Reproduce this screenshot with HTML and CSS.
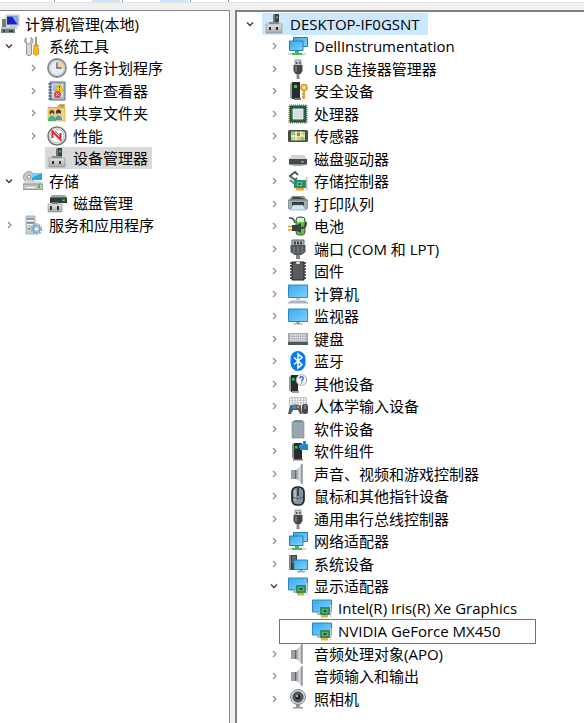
FILE: index.html
```html
<!DOCTYPE html>
<html lang="zh-CN">
  <head>
    <meta charset="UTF-8" />
    <meta name="viewport" content="width=device-width, initial-scale=1.0" />
    <title>计算机管理</title>
    <link rel="stylesheet" href="styles.css">
  </head>
  <body>
    <!-- icon set, 20x20 each -->
    <svg class="sprite" aria-hidden="true">
      <defs>
        <linearGradient id="g-screen" x1="0" y1="0" x2="1" y2="1">
          <stop offset="0" stop-color="#35aaf2" /><stop offset="1" stop-color="#84d2ff" />
        </linearGradient>
        <linearGradient id="g-steel" x1="0" y1="0" x2="1" y2="0">
          <stop offset="0" stop-color="#8b9096" /><stop offset=".5" stop-color="#e3e5e7" /><stop offset="1" stop-color="#9a9ea3" />
        </linearGradient>
        <linearGradient id="g-case" x1="0" y1="0" x2="0" y2="1">
          <stop offset="0" stop-color="#e6e6e6" /><stop offset="1" stop-color="#a4a6a8" />
        </linearGradient>
      </defs>

      <symbol id="closed" viewBox="0 0 16 16"><path d="M7 5l3 3-3 3" fill="none" stroke="#8c8c8c" stroke-width="1.2" /></symbol>
      <symbol id="open" viewBox="0 0 16 16"><path d="M5 6.5l3 3 3-3" fill="none" stroke="#404040" stroke-width="1.4" /></symbol>

      <symbol id="computer-mgmt" viewBox="0 0 20 20">
        <path d="M5 1h13v11H5z" fill="#d9dbd2" stroke="#a9aba3" stroke-width=".6" />
        <path d="M6 2.500h10.500v8H6z" fill="#1721c9" />
        <path d="M11 2.500h5.500v8z" fill="#7fb0f5" />
        <path d="M9 12h6l2 3H8z" fill="#c9cbc6" />
        <path d="M1 5h4v9H1z" fill="#6e7d86" />
        <path d="M0 13h14v6H0z" fill="#718087" />
        <path d="M0 13h14v2H0z" fill="#b7c3c6" />
        <path d="M2 16h2v2H2zM8 16h4v2H8z" fill="#35434a" />
        <path d="M2 11h3v2H2z" fill="#39ac3e" />
      </symbol>

      <symbol id="tools" viewBox="0 0 20 20">
        <path d="M3 2v4l2.500 2 2.500-2V1.500c2 1 2.500 4.500.5 6.500v10c0 2-5 2-5 0V8C1 6 1.500 3 3 2z" fill="#d6d9db" stroke="#777b7e" stroke-width=".8" />
        <path d="M12.500 1h1v8h-1z" fill="#a6a8ab" stroke="#777" stroke-width=".6" />
        <path d="M10.500 9h5l-.8 2.500.8 1.500v5c0 1.500-5 1.500-5 0v-5l.8-1.500z" fill="#f8b617" stroke="#cf8300" stroke-width=".7" />
      </symbol>

      <symbol id="clock" viewBox="0 0 20 20">
        <circle cx="10" cy="10" r="9" fill="#e9ecee" stroke="#868a8e" stroke-width="1.800" />
        <path d="M10 10V3a7 7 0 0 1 7 7z" fill="#f6d59a" />
        <circle cx="10" cy="10" r="7.300" fill="none" stroke="#c5c8ca" />
        <path d="M10 4.500V10h4.500" fill="none" stroke="#566879" stroke-width="1.400" />
      </symbol>

      <symbol id="events" viewBox="0 0 20 20">
        <path d="M3 1h15v18H3z" fill="#a5bbd3" stroke="#576e98" />
        <path d="M5 3h11v13H5z" fill="#d2ddec" />
        <path d="M6 5h7M6 7h7M6 9h7" stroke="#7d98bc" />
        <path d="M1.500 3h3M1.500 6h3M1.500 9h3M1.500 12h3M1.500 15h3M1.500 18h3" stroke="#4e5b77" stroke-width="1.300" />
        <path d="M12.500 2l4 8h-8z" fill="#ffd91a" stroke="#c99c00" stroke-width=".7" />
        <path d="M12.500 5v2.500m0 .7v1" stroke="#333" />
        <circle cx="10.500" cy="13.500" r="3.500" fill="#dc4548" />
        <path d="M9.200 12.200l2.600 2.600m0-2.600l-2.600 2.600" stroke="#fff" />
      </symbol>

      <symbol id="shared" viewBox="0 0 20 20">
        <path d="M1 4h9l2-3h6v16H1z" fill="#e3b654" />
        <path d="M1 5h17v13H1z" fill="#f4d27b" stroke="#d3a33f" stroke-width=".6" />
        <path d="M13 2h4v1.500h-4z" fill="#4f9fd7" />
        <circle cx="5" cy="9.500" r="2.500" fill="#5c4334" /><circle cx="11.500" cy="9" r="2.500" fill="#453327" />
        <path d="M4 10h2.500v2H4zM10.500 10h2.500v2h-2.500z" fill="#edbd90" />
        <path d="M1 18c0-7 8-7 8 0z" fill="#3db583" /><path d="M8 17c0-6 7-6 7 0z" fill="#409ccf" />
      </symbol>

      <symbol id="perf" viewBox="0 0 20 20">
        <circle cx="10" cy="10" r="9" fill="#f5f5f5" stroke="#777b7d" stroke-width="1.600" />
        <circle cx="10" cy="10" r="7" fill="#fff" stroke="#b6b8b8" />
        <path d="M5.500 12V5.500l8 8V7" fill="none" stroke="#df292d" stroke-width="2" />
        <path d="M8 5l6 6" stroke="#444" stroke-width=".8" />
      </symbol>

      <symbol id="device" viewBox="0 0 20 20">
        <path d="M9 1l2-1h4v9H9z" fill="#3d4143" />
        <path d="M9 1l2-1v9H9z" fill="#727678" />
        <path d="M12 2.500h2v2h-2z" fill="#38ce45" />
        <path d="M5 8h10v3H5z" fill="#85898b" />
        <path d="M2 10h16v9H2z" fill="url(#g-case)" stroke="#929597" stroke-width=".7" />
        <path d="M5 13h2v3H5zM12 13h2v3h-2z" fill="#2d2f31" />
      </symbol>

      <symbol id="storage" viewBox="0 0 20 20">
        <circle cx="6" cy="6" r="5.500" fill="#c6cbcf" stroke="#888e92" stroke-width=".8" />
        <circle cx="6" cy="6" r="1.800" fill="#fff" stroke="#8d9297" />
        <path d="M9 2h10v7H9z" fill="#27a5e4" /><path d="M9 2h10L9 7z" fill="#75cef5" />
        <path d="M2 10h16l2 3v6H0v-6z" fill="#d5d7d8" />
        <path d="M0 13h20v5.500H0z" fill="#c1c4c5" stroke="#858889" stroke-width=".8" />
        <path d="M15 13.500h2v4h-2z" fill="#43c638" /><path d="M3 16.500h9" stroke="#fff" />
      </symbol>

      <symbol id="disk-mgmt" viewBox="0 0 20 20">
        <path d="M5 2h13l2 3v4H3V5z" fill="#a0a3a4" />
        <path d="M3 4.500h17V10H3z" fill="#34383a" />
        <path d="M15 6.500h3v1.500h-3z" fill="#42d54c" />
        <path d="M5 9h6v3H5z" fill="#747779" />
        <path d="M1 11h14v8H1z" fill="url(#g-case)" stroke="#929597" stroke-width=".7" />
        <path d="M3 13h2v4H3zM10 13h2v4h-2z" fill="#2d2f31" />
      </symbol>

      <symbol id="services" viewBox="0 0 20 20">
        <path d="M3 1h9v18H3z" fill="#c4d1da" stroke="#92a2ad" stroke-width=".8" />
        <path d="M4 4h7M4 8h7" stroke="#53636e" stroke-width="1.200" /><path d="M4 5.500h7M4 9.500h7" stroke="#fff" />
        <path d="M5 13h2v2H5z" fill="#55b951" />
        <circle cx="13.500" cy="14" r="4.800" fill="none" stroke="#83abc9" stroke-width="2" stroke-dasharray="2 1" />
        <circle cx="13.500" cy="14" r="3.500" fill="#afcfe4" stroke="#6c98ba" /><circle cx="13.500" cy="14" r="1.200" fill="#fff" />
      </symbol>

      <symbol id="network" viewBox="0 0 20 20">
        <path d="M5.500 1.500h14v9h-14z" fill="url(#g-screen)" stroke="#277eb5" />
        <path d="M1.500 5h13.500v9.500H1.500z" fill="url(#g-screen)" stroke="#277eb5" />
        <path d="M7 15h4v2h3v2H4v-2h3z" fill="#43bc50" />
        <path d="M0 17h4v2H0zM14 17h4v2h-4z" fill="#cbdad0" />
      </symbol>

      <symbol id="usb" viewBox="0 0 20 20">
        <path d="M7 1h6v6H7z" fill="#c9cccd" stroke="#777" stroke-width=".7" />
        <path d="M8 3h1.500v2H8zM11 3h1.500v2H11z" fill="#555" />
        <path d="M5.500 6h9v6l-2 3h-5l-2-3z" fill="#444749" />
        <path d="M7 7h2v6H7z" fill="#6e7172" /><path d="M8.500 15h3v5h-3z" fill="#87898b" />
      </symbol>

      <symbol id="security" viewBox="0 0 20 20">
        <path d="M2 3l3-2v17l-3-1z" fill="#9b9fa1" /><path d="M4 1h8v17H4z" fill="#292c2e" />
        <path d="M6 4h3v3H6z" fill="#2ad540" /><path d="M6 17h7v2H6z" fill="#777" />
        <circle cx="16" cy="6.500" r="3" fill="#f7db91" stroke="#d99827" stroke-width="1.600" />
        <path d="M16 9.500V18m0-5h-2m2 3h-2" stroke="#daa13a" stroke-width="2" fill="none" />
      </symbol>

      <symbol id="cpu" viewBox="0 0 20 20">
        <path d="M1 1h18v18H1z" fill="none" stroke="#a79855" stroke-width="1.500" stroke-dasharray="1 1" />
        <path d="M2 2h16v16H2z" fill="#23664e" stroke="#174b39" />
        <path d="M5 5h10v10H5z" fill="#d9dddb" stroke="#f3f6f4" stroke-width=".8" />
      </symbol>

      <symbol id="sensor" viewBox="0 0 20 20">
        <rect x="0" y="4" width="20" height="12" rx="1.500" fill="#474c46" />
        <path d="M3 5.500h14v9H3z" fill="#b5d592" />
        <path d="M3 10h14M8 5.500v9M13 5.500V10" stroke="#f7ebb8" stroke-width="1.500" />
        <path d="M4 6h3v3H4zM13 11h3v3h-3z" fill="#8ac47a" /><path d="M9 7h3v3H9z" fill="#e85d47" />
      </symbol>

      <symbol id="drive" viewBox="0 0 20 20">
        <path d="M4 6h12l3 4H1z" fill="#d1d3d4" /><path d="M1 10h18v5c0 2-18 2-18 0z" fill="#45494b" />
        <path d="M13 12h3v1.500h-3z" fill="#36dc49" /><path d="M1 15.500h18" stroke="#929596" />
      </symbol>

      <symbol id="storage-ctl" viewBox="0 0 20 20">
        <path d="M10 4L7 1 2 5l5 4 2-2" fill="none" stroke="#555a5c" stroke-width="2" />
        <path d="M2 9l5 4 5-4" fill="none" stroke="#777c7e" stroke-width="2" />
        <path d="M6 9h13v8H6z" fill="#25916c" /><path d="M18 6h1.500v13H18z" fill="#c1c5c5" />
        <path d="M9 11h5v4H9z" fill="#6ec39d" /><path d="M10.500 12h2v2h-2z" fill="#244a3a" />
        <path d="M8 17h8v2.500H8z" fill="#f5a91f" />
      </symbol>

      <symbol id="printer" viewBox="0 0 20 20">
        <path d="M4 2h12l3 4H1z" fill="#868c91" /><path d="M5 3h10l1 2H4z" fill="#3b5148" />
        <path d="M0 6h20v8l-2 1H2l-2-1z" fill="#a6abaf" stroke="#666b6e" stroke-width=".7" />
        <path d="M4 8h12v5H4z" fill="#34393c" /><path d="M5 11h10l3 5H2z" fill="#cde6f8" stroke="#7592a5" stroke-width=".5" />
        <path d="M13 3h3v1h-3z" fill="#47d256" />
      </symbol>

      <symbol id="battery" viewBox="0 0 20 20">
        <rect x="8" y="1" width="9" height="18" rx="3" fill="#59c935" stroke="#4b554c" />
        <path d="M9 2h7v4H9z" fill="#d8efd3" />
        <path d="M1 2c5 0 5 2 6 5" stroke="#484b4d" fill="none" stroke-width="1.500" />
        <path d="M4 9h5l4-2v10l-4-2H4z" fill="#3c3f40" />
        <path d="M0 10.500h4M0 14h4" stroke="#d7a22d" stroke-width="1.500" />
        <path d="M13 12c5 0 5-3 5-6" stroke="#3c3f40" stroke-width="2" fill="none" />
      </symbol>

      <symbol id="port" viewBox="0 0 20 20">
        <path d="M4 1h12v6H4z" fill="#b1b4b6" stroke="#626567" />
        <path d="M6 2.500h2v3H6zM9 2.500h2v3H9zM12 2.500h2v3h-2z" fill="#444" />
        <path d="M2.500 6h15v7l-4 3h-7l-4-3z" fill="#55585a" />
        <path d="M6 8v6M10 8v6M14 8v6" stroke="#85898b" stroke-width="1.200" /><path d="M8 16h4v4H8z" fill="#818486" />
      </symbol>

      <symbol id="firmware" viewBox="0 0 20 20">
        <path d="M2 2h16M2 5h16M2 8h16M2 11h16M2 14h16M2 17h16" stroke="#303234" stroke-width="1.700" />
        <path d="M4 1h12v18H4z" fill="#595c5e" stroke="#252729" /><path d="M8 1h4c0 3-4 3-4 0z" fill="#eceded" />
      </symbol>

      <symbol id="computer" viewBox="0 0 20 20">
        <path d="M.5 1h19v12.500H.5z" fill="url(#g-screen)" stroke="#3386b8" />
        <path d="M8 14h4v2H8z" fill="#c3ced6" /><path d="M3 16.500h14l3 2v1H0v-1z" fill="#a5b6c4" />
      </symbol>

      <symbol id="monitor" viewBox="0 0 20 20">
        <path d="M.5 3h19v12.500H.5z" fill="url(#g-screen)" stroke="#3386b8" />
        <path d="M8.500 16h3v1.500h3v1h-9v-1h3z" fill="#7e98a9" />
      </symbol>

      <symbol id="keyboard" viewBox="0 0 20 20">
        <path d="M0 4h20v11H0z" fill="#a6abb0" /><path d="M0 13h20v3H0z" fill="#52585e" />
        <path d="M2 6h16M2 8.500h16M2 11h16" stroke="#f5f5f5" stroke-width="1.400" stroke-dasharray="1.500 .7" />
      </symbol>

      <symbol id="bluetooth" viewBox="0 0 20 20">
        <rect x="2.500" y="0" width="15" height="20" rx="7.500" fill="#087bea" />
        <path d="M6 6.500l8 7-4 3.500V3l4 3.500-8 7" fill="none" stroke="#fff" stroke-width="1.500" />
      </symbol>

      <symbol id="other" viewBox="0 0 20 20">
        <path d="M1 3l3-2v17l-3-1z" fill="#969a9c" /><path d="M3 1h7v17H3z" fill="#292c2e" />
        <path d="M4 4h2.500v2.500H4z" fill="#2bd641" /><path d="M4 17h7v2H4z" fill="#999" />
        <circle cx="13.500" cy="6" r="5.300" fill="#f8fafb" stroke="#a3a8ad" />
        <path d="M11.800 4.500c0-2.500 3.500-2.300 3.500-.2 0 1.500-1.700 1.400-1.700 3m0 1v1.200" fill="none" stroke="#2d72bc" stroke-width="1.500" />
      </symbol>

      <symbol id="hid" viewBox="0 0 20 20">
        <path d="M1 1h18v9H1z" fill="#bfc3c6" />
        <path d="M2 3h16M2 5.500h16M2 8h16" stroke="#fff" stroke-width="1.300" stroke-dasharray="1.800 1" />
        <path d="M2 10c2-2 9-2 11 0l1 8h-2l-2-4H5l-2 4H0z" fill="#54595d" />
        <circle cx="6" cy="11" r="2" fill="#318fe1" /><circle cx="10" cy="11" r="1.200" fill="#f09225" />
        <rect x="14" y="8" width="6" height="10" rx="2.500" fill="#45494c" /><path d="M17 9v4" stroke="#abb" />
      </symbol>

      <symbol id="soft-device" viewBox="0 0 20 20">
        <path d="M4 3l3-2h7l2 2v16H4z" fill="#7f8b93" /><path d="M4 3h12v16H4z" fill="#9aa7b0" stroke="#78848c" stroke-width=".6" />
        <path d="M9 6h2.500v2.500H9z" fill="#32cdf1" />
      </symbol>

      <symbol id="component" viewBox="0 0 20 20">
        <path d="M4 3l3-1v16l-3-1z" fill="#8c9093" /><path d="M6 2h8v16H6z" fill="#292c2e" />
        <path d="M7 5h2.500v2.500H7z" fill="#29d43e" /><path d="M5 18h10v1.500H5z" fill="#777" />
        <path d="M12 3h3V0h3v3h2v6h-8V7h-1V4h1z" fill="#2487d2" />
      </symbol>

      <symbol id="speaker" viewBox="0 0 20 20">
        <path d="M3 6h5v9H3z" fill="#9ca1a6" /><path d="M7 6h1.500v9H7z" fill="#5f6468" />
        <path d="M8.500 6L14 0v20l-5.500-5z" fill="url(#g-steel)" />
        <path d="M14 0v20" stroke="#8f9498" stroke-width="1.500" />
      </symbol>

      <symbol id="mouse" viewBox="0 0 20 20">
        <rect x="4" y="1" width="12" height="18" rx="5" fill="#8492a0" stroke="#1f2327" stroke-width="1.700" />
        <path d="M10 2v8" stroke="#252b31" stroke-width="1.500" /><path d="M7 4v11" stroke="#b9c8d6" stroke-width="1.500" />
        <path d="M5 11c3 2 7 2 10 0" fill="none" stroke="#4a5663" />
      </symbol>

      <symbol id="system" viewBox="0 0 20 20">
        <path d="M1 1h8v15H1z" fill="#3b4044" /><path d="M1 1h2v15H1z" fill="#81878b" />
        <path d="M4 3h4M4 5h4" stroke="#aab" stroke-width=".8" /><path d="M4 7h1.500v1.500H4z" fill="#33d449" />
        <path d="M6 6h13.500v9.500H6z" fill="url(#g-screen)" stroke="#3381b1" />
        <path d="M11 16h4v1h2v1.500H9V17h2z" fill="#a0b1bd" />
      </symbol>

      <symbol id="display" viewBox="0 0 20 20">
        <path d="M.5 2h19v12H.5z" fill="url(#g-screen)" stroke="#3386b8" />
        <path d="M5 15h4v2H5z" fill="#a9bac6" />
        <path d="M8 9h11v8H8z" fill="#2c8f62" /><path d="M18 7h1.500v12H18z" fill="#c6d0cc" />
        <path d="M10 11h6v4h-6z" fill="#5cae7c" /><path d="M11.500 12h3v2h-3z" fill="#234b36" />
        <path d="M9 17h7v2.500H9z" fill="#f6ac1f" />
      </symbol>

      <symbol id="camera" viewBox="0 0 20 20">
        <path d="M8 15h4v3h3v1.500H5V18h3z" fill="#939799" />
        <circle cx="10" cy="8" r="7.500" fill="#cfd2d3" stroke="#86898b" />
        <circle cx="10" cy="8" r="5" fill="#5b6269" stroke="#393f44" /><circle cx="10" cy="8" r="2.700" fill="#18232d" />
        <circle cx="9" cy="7" r="1.200" fill="#8bb7d4" />
      </symbol>
    </svg>

    <div class="toolbar">
      <span class="separator"></span>
      <span class="tool"></span>
      <span class="separator"></span>
      <span class="tool"></span>
      <span class="separator"></span>
      <span class="separator"></span>
    </div>

    <main class="workspace">
      <nav class="console" aria-label="控制台树">
        <ul class="tree">
          <li>
            <div class="row root"><span class="item"><svg class="icon"><use href="#computer-mgmt" /></svg>计算机管理(本地)</span></div>
            <ul class="top">
              <li>
                <div class="row"><button class="toggle" aria-label="折叠" aria-expanded="true"><svg><use href="#open" /></svg></button><span class="item"><svg class="icon"><use href="#tools" /></svg>系统工具</span></div>
                <ul>
                  <li><div class="row"><button class="toggle" aria-label="展开"><svg><use href="#closed" /></svg></button><span class="item"><svg class="icon"><use href="#clock" /></svg>任务计划程序</span></div></li>
                  <li><div class="row"><button class="toggle" aria-label="展开"><svg><use href="#closed" /></svg></button><span class="item"><svg class="icon"><use href="#events" /></svg>事件查看器</span></div></li>
                  <li><div class="row"><button class="toggle" aria-label="展开"><svg><use href="#closed" /></svg></button><span class="item"><svg class="icon"><use href="#shared" /></svg>共享文件夹</span></div></li>
                  <li><div class="row"><button class="toggle" aria-label="展开"><svg><use href="#closed" /></svg></button><span class="item"><svg class="icon"><use href="#perf" /></svg>性能</span></div></li>
                  <li><div class="row leaf"><span class="item current"><svg class="icon"><use href="#device" /></svg>设备管理器</span></div></li>
                </ul>
              </li>
              <li>
                <div class="row"><button class="toggle" aria-label="折叠" aria-expanded="true"><svg><use href="#open" /></svg></button><span class="item"><svg class="icon"><use href="#storage" /></svg>存储</span></div>
                <ul>
                  <li><div class="row leaf"><span class="item"><svg class="icon"><use href="#disk-mgmt" /></svg>磁盘管理</span></div></li>
                </ul>
              </li>
              <li><div class="row"><button class="toggle" aria-label="展开"><svg><use href="#closed" /></svg></button><span class="item"><svg class="icon"><use href="#services" /></svg>服务和应用程序</span></div></li>
            </ul>
          </li>
        </ul>
      </nav>

      <section class="devices" aria-label="设备管理器">
        <ul class="tree">
          <li>
            <div class="row"><button class="toggle" aria-label="折叠" aria-expanded="true"><svg><use href="#open" /></svg></button><span class="item selected"><svg class="icon"><use href="#device" /></svg>DESKTOP-IF0GSNT</span></div>
            <ul>
              <li><div class="row"><button class="toggle" aria-label="展开"><svg><use href="#closed" /></svg></button><span class="item"><svg class="icon"><use href="#network" /></svg>DellInstrumentation</span></div></li>
              <li><div class="row"><button class="toggle" aria-label="展开"><svg><use href="#closed" /></svg></button><span class="item"><svg class="icon"><use href="#usb" /></svg>USB 连接器管理器</span></div></li>
              <li><div class="row"><button class="toggle" aria-label="展开"><svg><use href="#closed" /></svg></button><span class="item"><svg class="icon"><use href="#security" /></svg>安全设备</span></div></li>
              <li><div class="row"><button class="toggle" aria-label="展开"><svg><use href="#closed" /></svg></button><span class="item"><svg class="icon"><use href="#cpu" /></svg>处理器</span></div></li>
              <li><div class="row"><button class="toggle" aria-label="展开"><svg><use href="#closed" /></svg></button><span class="item"><svg class="icon"><use href="#sensor" /></svg>传感器</span></div></li>
              <li><div class="row"><button class="toggle" aria-label="展开"><svg><use href="#closed" /></svg></button><span class="item"><svg class="icon"><use href="#drive" /></svg>磁盘驱动器</span></div></li>
              <li><div class="row"><button class="toggle" aria-label="展开"><svg><use href="#closed" /></svg></button><span class="item"><svg class="icon"><use href="#storage-ctl" /></svg>存储控制器</span></div></li>
              <li><div class="row"><button class="toggle" aria-label="展开"><svg><use href="#closed" /></svg></button><span class="item"><svg class="icon"><use href="#printer" /></svg>打印队列</span></div></li>
              <li><div class="row"><button class="toggle" aria-label="展开"><svg><use href="#closed" /></svg></button><span class="item"><svg class="icon"><use href="#battery" /></svg>电池</span></div></li>
              <li><div class="row"><button class="toggle" aria-label="展开"><svg><use href="#closed" /></svg></button><span class="item"><svg class="icon"><use href="#port" /></svg>端口 (COM 和 LPT)</span></div></li>
              <li><div class="row"><button class="toggle" aria-label="展开"><svg><use href="#closed" /></svg></button><span class="item"><svg class="icon"><use href="#firmware" /></svg>固件</span></div></li>
              <li><div class="row"><button class="toggle" aria-label="展开"><svg><use href="#closed" /></svg></button><span class="item"><svg class="icon"><use href="#computer" /></svg>计算机</span></div></li>
              <li><div class="row"><button class="toggle" aria-label="展开"><svg><use href="#closed" /></svg></button><span class="item"><svg class="icon"><use href="#monitor" /></svg>监视器</span></div></li>
              <li><div class="row"><button class="toggle" aria-label="展开"><svg><use href="#closed" /></svg></button><span class="item"><svg class="icon"><use href="#keyboard" /></svg>键盘</span></div></li>
              <li><div class="row"><button class="toggle" aria-label="展开"><svg><use href="#closed" /></svg></button><span class="item"><svg class="icon"><use href="#bluetooth" /></svg>蓝牙</span></div></li>
              <li><div class="row"><button class="toggle" aria-label="展开"><svg><use href="#closed" /></svg></button><span class="item"><svg class="icon"><use href="#other" /></svg>其他设备</span></div></li>
              <li><div class="row"><button class="toggle" aria-label="展开"><svg><use href="#closed" /></svg></button><span class="item"><svg class="icon"><use href="#hid" /></svg>人体学输入设备</span></div></li>
              <li><div class="row"><button class="toggle" aria-label="展开"><svg><use href="#closed" /></svg></button><span class="item"><svg class="icon"><use href="#soft-device" /></svg>软件设备</span></div></li>
              <li><div class="row"><button class="toggle" aria-label="展开"><svg><use href="#closed" /></svg></button><span class="item"><svg class="icon"><use href="#component" /></svg>软件组件</span></div></li>
              <li><div class="row"><button class="toggle" aria-label="展开"><svg><use href="#closed" /></svg></button><span class="item"><svg class="icon"><use href="#speaker" /></svg>声音、视频和游戏控制器</span></div></li>
              <li><div class="row"><button class="toggle" aria-label="展开"><svg><use href="#closed" /></svg></button><span class="item"><svg class="icon"><use href="#mouse" /></svg>鼠标和其他指针设备</span></div></li>
              <li><div class="row"><button class="toggle" aria-label="展开"><svg><use href="#closed" /></svg></button><span class="item"><svg class="icon"><use href="#usb" /></svg>通用串行总线控制器</span></div></li>
              <li><div class="row"><button class="toggle" aria-label="展开"><svg><use href="#closed" /></svg></button><span class="item"><svg class="icon"><use href="#network" /></svg>网络适配器</span></div></li>
              <li><div class="row"><button class="toggle" aria-label="展开"><svg><use href="#closed" /></svg></button><span class="item"><svg class="icon"><use href="#system" /></svg>系统设备</span></div></li>
              <li>
                <div class="row"><button class="toggle" aria-label="折叠" aria-expanded="true"><svg><use href="#open" /></svg></button><span class="item"><svg class="icon"><use href="#display" /></svg>显示适配器</span></div>
                <ul>
                  <li><div class="row leaf"><span class="item"><svg class="icon"><use href="#display" /></svg>Intel(R) Iris(R) Xe Graphics</span></div></li>
                  <li><div class="row leaf marked"><span class="item"><svg class="icon"><use href="#display" /></svg>NVIDIA GeForce MX450</span></div></li>
                </ul>
              </li>
              <li><div class="row"><button class="toggle" aria-label="展开"><svg><use href="#closed" /></svg></button><span class="item"><svg class="icon"><use href="#speaker" /></svg>音频处理对象(APO)</span></div></li>
              <li><div class="row"><button class="toggle" aria-label="展开"><svg><use href="#closed" /></svg></button><span class="item"><svg class="icon"><use href="#speaker" /></svg>音频输入和输出</span></div></li>
              <li><div class="row"><button class="toggle" aria-label="展开"><svg><use href="#closed" /></svg></button><span class="item"><svg class="icon"><use href="#camera" /></svg>照相机</span></div></li>
            </ul>
          </li>
        </ul>
      </section>
    </main>
  </body>
</html>
```

FILE: styles.css
```css
* {
  box-sizing: border-box;
  margin: 0;
  padding: 0;
}

body {
  display: flex;
  flex-direction: column;
  min-height: 100vh;
  background: #f0f0f0;
  color: #000;
  font-family: "Open Sans", "Noto Sans CJK SC", sans-serif;
  font-size: 15px;
  line-height: 22px;
}

ul {
  list-style: none;
}

.sprite {
  position: absolute;
  width: 0;
  height: 0;
}

/* bottom edge of the toolbar */
.toolbar {
  display: flex;
  gap: 2px;
  height: 3px;
  padding-left: 54px;
  background: #fff;
  border-bottom: 1px solid #e3e3e3;
}

.separator {
  width: 1px;
  margin-right: 35px;
  background: #a0a0a0;
}

.tool {
  width: 28px;
  background: #cce8ff;
}

.workspace {
  display: flex;
  flex: 1;
  gap: 5px;
  padding-top: 7px;
}

.console {
  flex: 0 0 230px;
  padding: 1px 0 0 1px;
  background: #fff;
  border-top: 1px solid #828790;
  border-right: 1px solid #828790;
}

.devices {
  flex: 1;
  min-width: 0;
  padding: 0 0 0 5px;
  background: #fff;
  border-top: 2px solid #828282;
  border-left: 2px solid #828282;
}

.tree {
  padding-top: 1px;
}

.tree ul {
  padding-left: 24px;
}

.tree .top {
  padding-left: 0;
}

.row {
  display: flex;
  align-items: center;
  gap: 4px;
  height: 22px;
  white-space: nowrap;
}

li:nth-child(even) > .row {
  height: 23px;
}

.toggle {
  width: 16px;
  height: 16px;
  background: none;
  border: none;
  cursor: pointer;
}

.toggle svg {
  display: block;
  width: 16px;
  height: 16px;
}

.item {
  display: flex;
  align-items: center;
  gap: 6px;
  height: 22px;
  padding: 0 4px 0 2px;
}

.icon {
  flex: none;
  width: 20px;
  height: 20px;
}

.leaf {
  padding-left: 20px;
}

.root .item {
  gap: 4px;
  padding-left: 0;
}

.current {
  background: #d9d9d9;
}

.selected {
  padding-right: 8px;
  background: #cce8ff;
}

/* red frame around the discrete GPU */
.marked {
  position: relative;
}

.marked::before {
  content: "";
  position: absolute;
  top: 0;
  left: -11px;
  width: 255px;
  height: 23px;
  border: 1px solid #f03c3c;
}
```
